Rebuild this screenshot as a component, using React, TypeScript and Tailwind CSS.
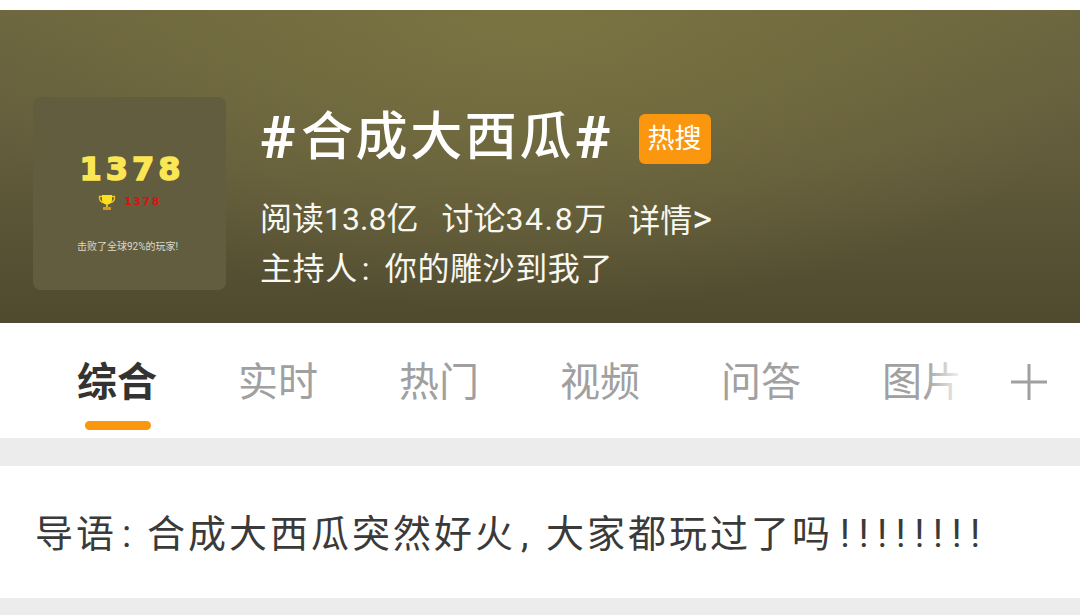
import React from 'react';

const cjk = "font-['Roboto','Noto_Sans_CJK_SC',sans-serif]";

const tabs = ['实时', '热门', '视频', '问答'];

// Little trophy next to the best score
const Trophy = () => (
    <svg width="18" height="17" viewBox="0 0 18 17">
        <path d="M4 2.5H1.5C1.2 6 3 8 5.5 8.5M14 2.5h2.5C16.8 6 15 8 12.5 8.5" fill="none" stroke="#f0c820" strokeWidth="1.4" />
        <path d="M4 1h10v4.5c0 3-2.2 5-5 5s-5-2-5-5z" fill="#fbe21c" />
        <rect x="8" y="10" width="2" height="3" fill="#e8b818" />
        <rect x="5" y="13" width="8" height="3" rx="0.5" fill="#d99a1c" />
    </svg>
);

export default function App() {
    return (
        <div className={`w-[1080px] h-[615px] overflow-hidden bg-[#ececec] ${cjk}`}>
            <div className="h-[10px] bg-white" />

            {/* Banner */}
            <div className="h-[313px] flex items-end gap-[34px] pl-[33px] pb-[27px] bg-[radial-gradient(ellipse_600px_300px_at_530px_0px,#7a7341_0%,rgba(122,115,65,0)_100%),linear-gradient(to_bottom,#6c6640_0%,#625c3c_45%,#4f4a2f_100%)]">
                {/* Game result thumbnail */}
                <div className="mb-[6px] w-[193px] h-[193px] rounded-[8px] bg-[#625d3f] flex flex-col items-center pt-[54px]">
                    <div className="pl-[5px] h-[36px] leading-[36px] text-[32px] font-black tracking-[4px] text-[#fbe654] [-webkit-text-stroke:1.5px_#fbe654] font-['DejaVu_Sans',sans-serif]">1378</div>
                    <div className="mt-[5px] h-[20px] flex items-center gap-[8px]">
                        <Trophy />
                        <span className="text-[11px] font-black tracking-[1.5px] text-[#d8140f] font-['DejaVu_Sans',sans-serif]">1378</span>
                    </div>
                    <div className="mt-[28px] pr-[4px] text-[10px] leading-[14px] text-[#dcd9ca]">击败了全球92%的玩家!</div>
                </div>

                {/* Topic info */}
                <div className="flex flex-col text-white pb-[2px]">
                    <div className="flex items-center h-[60px] mb-[26px]">
                        <span className="w-[41px] text-[60px] leading-[60px] font-bold">#</span>
                        <span className="text-[52px] leading-[60px] font-medium tracking-[2.6px]">合成大西瓜</span>
                        <span className="ml-[1px] text-[60px] leading-[60px] font-bold">#</span>
                        <span className="ml-[28px] mt-[2px] w-[72px] h-[50px] rounded-[6px] bg-[#fb970f] flex items-center justify-center text-[27px]">热搜</span>
                    </div>
                    <div className="flex text-[32px] leading-[50px] h-[50px] text-[#f8f7f0]">
                        <span>阅读13.8亿</span>
                        <span className="ml-[23px]">讨论<span className="tracking-[1.6px]">34.8</span>万</span>
                        <span className="ml-[22px]">详情<span className="text-[38px]">&gt;</span></span>
                    </div>
                    <div className="flex text-[32px] leading-[50px] h-[50px] text-[#f8f7f0] tracking-[0.6px]">
                        <span>主持人</span>
                        <span className="w-[27px] pl-[4px]">:</span>
                        <span>你的雕沙到我了</span>
                    </div>
                </div>
            </div>

            {/* Tabs */}
            <div className="relative h-[115px] bg-white flex items-start pl-[77px] pt-[36px]">
                <div className="flex flex-col items-center w-[80px]">
                    <span className="text-[40px] leading-[48px] font-bold text-[#333333]">综合</span>
                    <div className="mt-[14px] ml-[2px] w-[66px] h-[9px] rounded-full bg-[#fb970f]" />
                </div>
                {tabs.map((tab) => (
                    <span key={tab} className="ml-[81px] w-[80px] text-[40px] leading-[48px] text-[#a0a0a0] text-center">{tab}</span>
                ))}
                <span className="ml-[81px] w-[80px] text-[40px] leading-[48px] text-[#a0a0a0] text-center">图片</span>
                <div className="absolute left-[925px] top-0 w-[40px] h-full bg-linear-to-r from-white/0 to-white" />
                <div className="absolute left-[965px] top-0 w-[115px] h-full bg-white flex items-center justify-center pl-[13px] pt-[3px]">
                    <svg width="36" height="36" viewBox="0 0 36 36">
                        <path d="M0 18h36M18 0v36" stroke="#a0a0a0" strokeWidth="3" />
                    </svg>
                </div>
            </div>

            {/* Lead text */}
            <div className="mt-[28px] h-[132px] bg-white flex items-center pl-[35px] pt-[4px]">
                <div className="flex text-[38px] leading-[48px] tracking-[3px] text-[#3a3a3a] whitespace-nowrap">
                    <span>导语</span>
                    <span className="w-[30px] pl-[5px]">:</span>
                    <span>合成大西瓜突然好火</span>
                    <span className="w-[30px] pl-[5px]">,</span>
                    <span>大家都玩过了吗</span>
                    <span className="ml-[7px] tracking-[8.8px]">!!!!!!!!</span>
                </div>
            </div>
        </div>
    );
}
